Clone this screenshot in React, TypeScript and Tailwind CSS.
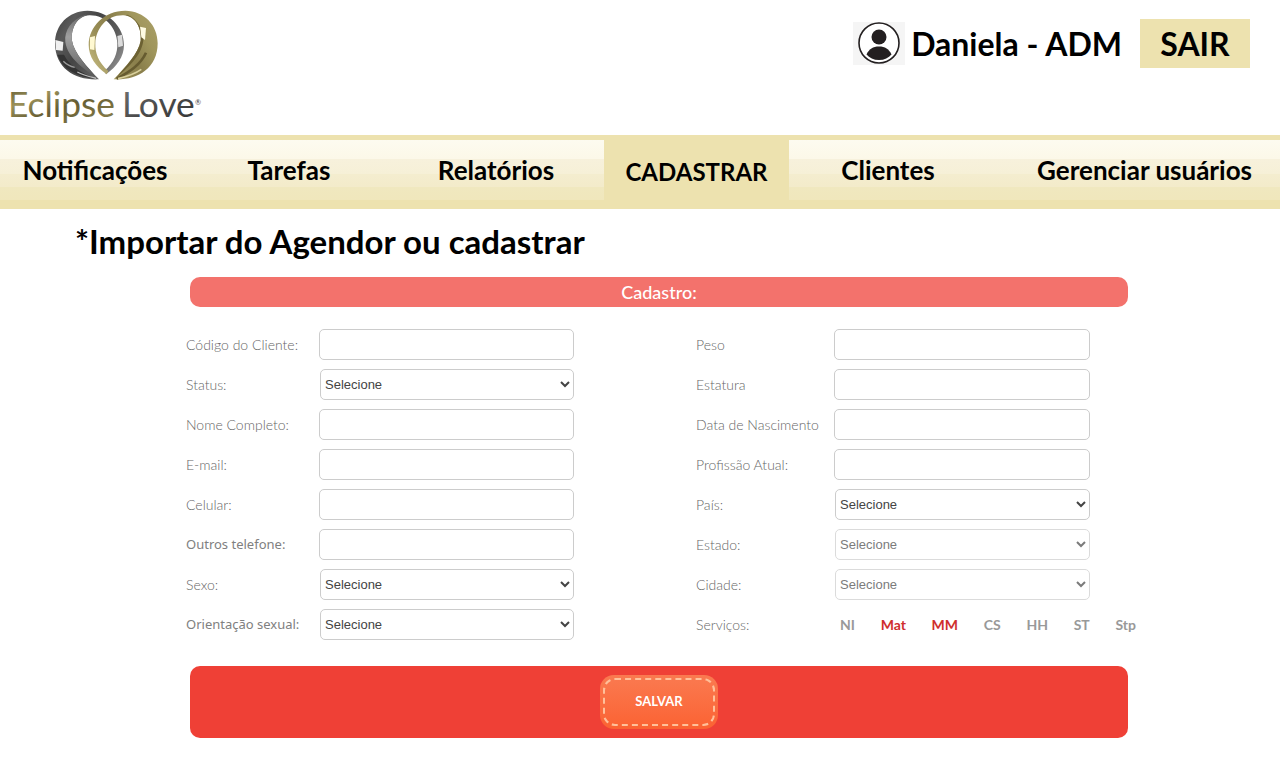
import React from "react";

const futura = "font-['Lato',sans-serif]";
const humanist = "font-['Noto_Sans',sans-serif]";

type Field = {
  id: string;
  label: string;
  kind: "text" | "select";
  disabled?: boolean;
  strong?: boolean;
};

const leftFields: Field[] = [
  { id: "codigo", label: "Código do Cliente:", kind: "text" },
  { id: "status", label: "Status:", kind: "select" },
  { id: "nome", label: "Nome Completo:", kind: "text" },
  { id: "email", label: "E-mail:", kind: "text" },
  { id: "celular", label: "Celular:", kind: "text" },
  { id: "outros", label: "Outros telefone:", kind: "text", strong: true },
  { id: "sexo", label: "Sexo:", kind: "select" },
  { id: "orientacao", label: "Orientação sexual:", kind: "select", strong: true },
];

const rightFields: Field[] = [
  { id: "peso", label: "Peso", kind: "text" },
  { id: "estatura", label: "Estatura", kind: "text" },
  { id: "nascimento", label: "Data de Nascimento", kind: "text" },
  { id: "profissao", label: "Profissão Atual:", kind: "text" },
  { id: "pais", label: "País:", kind: "select" },
  { id: "estado", label: "Estado:", kind: "select", disabled: true },
  { id: "cidade", label: "Cidade:", kind: "select", disabled: true },
];

const services = ["NI", "Mat", "MM", "CS", "HH", "ST", "Stp"];
const selectedServices = ["Mat", "MM"];

function Logo() {
  const half =
    "M297 238C230 242 165 208 165 130C165 75 205 33 262 32C325 32 372 80 372 135C372 170 350 200 318 223L313 213C343 187 353 160 352 130C350 85 318 45 268 46C232 48 212 85 216 122C222 160 262 200 297 238Z";
  return (
    <svg viewBox="0 0 660 405" className="h-[135px] w-[220px]" role="img" aria-label="Eclipse Love">
      <defs>
        <linearGradient id="silver" x1="0" y1="0" x2="1" y2="0.6">
          <stop offset="0" stopColor="#3f3f3f" />
          <stop offset="0.25" stopColor="#5a5a5a" />
          <stop offset="0.5" stopColor="#454545" />
          <stop offset="0.8" stopColor="#5c5c5c" />
          <stop offset="1" stopColor="#858585" />
        </linearGradient>
        <linearGradient id="silverFace" x1="0" y1="0" x2="0" y2="1">
          <stop offset="0" stopColor="#6a6a6a" />
          <stop offset="0.35" stopColor="#a0a0a0" />
          <stop offset="0.7" stopColor="#7c7c7c" />
          <stop offset="1" stopColor="#555555" />
        </linearGradient>
        <linearGradient id="gold" x1="0" y1="0" x2="1" y2="0.6">
          <stop offset="0" stopColor="#aca26a" />
          <stop offset="0.3" stopColor="#a0965c" />
          <stop offset="0.55" stopColor="#8a7f4c" />
          <stop offset="0.8" stopColor="#988d55" />
          <stop offset="1" stopColor="#b8ad74" />
        </linearGradient>
        <linearGradient id="goldText" x1="0" y1="0" x2="1" y2="1">
          <stop offset="0" stopColor="#57502c" />
          <stop offset="0.3" stopColor="#9b915a" />
          <stop offset="0.55" stopColor="#665d33" />
          <stop offset="1" stopColor="#8e8450" />
        </linearGradient>
        <linearGradient id="silverText" x1="0" y1="0" x2="1" y2="1">
          <stop offset="0" stopColor="#777777" />
          <stop offset="0.5" stopColor="#4b4b4b" />
          <stop offset="1" stopColor="#333333" />
        </linearGradient>
      </defs>
      <path d={half} fill="url(#silver)" />
      <path
        d="M256 44C214 58 192 92 196 126C202 172 250 206 290 234C262 200 222 160 216 122C212 85 232 50 262 46Z"
        fill="url(#silverFace)"
      />
      <path d="M166 120L190 126L188 152L168 150Z" fill="#f0f0f0" />
      <path d="M172 164C188 206 228 230 286 236C240 216 208 198 192 164Z" fill="#333333" />
      <path d="M190 184C200 194 212 200 224 202" fill="none" stroke="#9a9a9a" strokeWidth="4" />
      <path d="M232 216C250 226 268 230 288 235" fill="none" stroke="#bdbdbd" strokeWidth="4" />
      <path d="M352 108L366 104L369 137L355 142Z" fill="#dcdcdc" />
      <g transform="translate(638 0) scale(-1 1)">
        <path d={half} fill="url(#gold)" />
        <path
          d="M256 44C226 56 206 90 208 122C214 168 256 204 290 234C262 200 222 160 216 122C212 85 232 50 262 46Z"
          fill="#6c6133"
        />
        <path d="M200 84L218 80L214 112L203 120Z" fill="#fffce2" />
        <path d="M200 158C216 194 250 216 288 236" fill="none" stroke="#665b30" strokeWidth="8" />
        <path d="M214 208C236 224 260 230 284 236" fill="none" stroke="#d9d09c" strokeWidth="5" />
        <path d="M353 108L368 112L368 148L355 150Z" fill="#fff9d2" />
      </g>
      <g className="font-['Lato',sans-serif]" fontSize="106">
        <text x="24" y="352" fill="url(#goldText)">Eclipse</text>
        <text x="366" y="352" fill="url(#silverText)">Love</text>
        <text x="585" y="314" fontSize="22" fill="#444444">®</text>
      </g>
    </svg>
  );
}

function Avatar() {
  return (
    <svg viewBox="0 0 52 43" className="h-[43px] w-[52px]" aria-hidden="true">
      <rect width="52" height="43" fill="#f5f5f5" />
      <circle cx="26" cy="21" r="20" fill="#ffffff" stroke="#231f20" strokeWidth="1.6" />
      <circle cx="26" cy="15" r="7.5" fill="#231f20" />
      <path d="M13.500 32.500C16 27 20 24.500 26 24.500S36 27 38.500 32.500C35.500 36 31.500 38 26 38S16.500 36 13.500 32.500Z" fill="#231f20" />
    </svg>
  );
}

function Row({ field }: { field: Field }) {
  const labelStyle = field.strong
    ? `${humanist} text-[13px] text-[#808080]`
    : `${futura} text-[14px] font-light text-[#666]`;
  return (
    <div className="flex h-[31px] items-center">
      <label htmlFor={field.id} className={`w-[133px] shrink-0 whitespace-nowrap ${labelStyle}`}>
        {field.label}
      </label>
      {field.kind === "text" ? (
        <input
          id={field.id}
          type="text"
          className="h-full min-w-0 flex-1 rounded-[5px] border border-[#ccc] bg-white px-2 font-['Liberation_Sans',sans-serif] text-[13px]"
        />
      ) : (
        <select
          id={field.id}
          disabled={field.disabled}
          className="ml-px h-full min-w-0 flex-1 rounded-[5px] border border-[#ccc] bg-white font-['Liberation_Sans',sans-serif] text-[13px] text-[#444] disabled:opacity-70"
        >
          <option>Selecione</option>
        </select>
      )}
    </div>
  );
}

export default function App() {
  const navLink = "flex items-center justify-center whitespace-nowrap";
  return (
    <div className="min-h-screen bg-white font-['Lato',sans-serif] text-black">
      <header className="flex items-start justify-between pr-[30px]">
        <Logo />
        <div className="flex items-center pt-[19px]">
          <Avatar />
          <span className="ml-1.5 text-[32px] leading-[49px] font-bold">Daniela - ADM</span>
          <button type="button" className="ml-[18px] h-[49px] w-[110px] bg-[#ede2af] text-[32px] leading-[49px] font-bold">
            SAIR
          </button>
        </div>
      </header>

      <nav className="grid h-[74px] grid-cols-[190fr_198fr_216fr_185fr_198fr_293fr] border-t-[5px] border-b-[9px] border-[#ede2af] bg-[linear-gradient(to_bottom,#fdfbf0_0px,#fcf8e8_19px,#f7f1dc_19px,#f6f0d7_34px,#f4edcf_34px,#f3ebca_47px,#f0e8bf_47px,#f0e7bc_60px)] text-[26px] leading-none font-bold">
        <a href="#notificacoes" className={navLink}>Notificações</a>
        <a href="#tarefas" className={navLink}>Tarefas</a>
        <a href="#relatorios" className={navLink}>Relatórios</a>
        <a href="#cadastrar" aria-current="page" className={`${navLink} bg-[#ede2af] pt-1 text-[24px]`}>CADASTRAR</a>
        <a href="#clientes" className={navLink}>Clientes</a>
        <a href="#usuarios" className="flex items-center justify-end pr-7 whitespace-nowrap">Gerenciar usuários</a>
      </nav>

      <main>
        <h1 className="pt-3 pl-[75px] text-[33px] leading-10 font-bold">*Importar do Agendor ou cadastrar</h1>

        <form className="mt-4 mr-[152px] ml-[190px]" onSubmit={(e) => e.preventDefault()}>
          <h2 className={`${futura} rounded-[10px] bg-[#f3726c] text-center text-[18px] leading-[30px] font-medium text-white`}>
            Cadastro:
          </h2>

          <div className="mt-[22px] -ml-1 grid grid-cols-[510fr_432fr]">
            <div className="flex flex-col gap-[9px] pr-[122px]">
              {leftFields.map((f) => (
                <Row key={f.id} field={f} />
              ))}
            </div>
            <div className="flex flex-col gap-[9px] [&_label]:w-[138px]">
              {rightFields.map((f) => (
                <div key={f.id} className="pr-[38px]">
                  <Row field={f} />
                </div>
              ))}
              <div role="group" aria-labelledby="servicos" className="-mr-2 flex h-[31px] items-center">
                <span id="servicos" className={`${futura} w-36 shrink-0 text-[14px] font-light text-[#666]`}>Serviços:</span>
                <div className="flex flex-1 justify-between">
                  {services.map((s) => {
                    const on = selectedServices.includes(s);
                    return (
                      <button
                        key={s}
                        type="button"
                        aria-pressed={on}
                        className={`${futura} text-[14px] font-bold ${on ? "text-[#cf2e2e]" : "text-[#999]"}`}
                      >
                        {s}
                      </button>
                    );
                  })}
                </div>
              </div>
            </div>
          </div>

          <div className="mt-[26px] flex h-[72px] items-center justify-center rounded-[10px] bg-[#ef4036]">
            <button type="button" className="h-[54px] w-[118px] rounded-[14px] bg-linear-to-b from-[#fa7a50] to-[#fb6232] p-[3px]">
              <span className={`${futura} flex h-full items-center justify-center rounded-[12px] border-2 border-dashed border-[#ffc09a] text-[13px] font-bold text-white`}>
                SALVAR
              </span>
            </button>
          </div>
        </form>
      </main>
    </div>
  );
}
